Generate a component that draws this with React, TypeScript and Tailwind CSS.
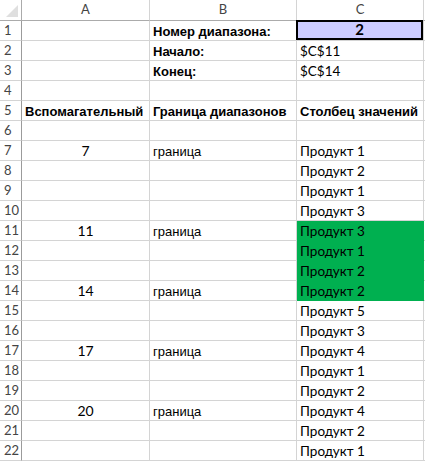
import React from "react"

type Cell = { v?: string; bold?: boolean; center?: boolean; arial?: boolean; bg?: string; sel?: boolean }
type Row = [Cell, Cell, Cell]

const e: Cell = {}
const prod = (n: number, green = false): Cell => ({ v: `Продукт ${n}`, bg: green ? "bg-[#00b050]" : undefined })
const num = (n: number): Cell => ({ v: String(n), center: true })
const gr: Cell = { v: "граница", arial: true }

const rows: Row[] = [
  [e, { v: "Номер диапазона:", bold: true, arial: true }, { v: "2", bold: true, center: true, sel: true }],
  [e, { v: "Начало:", bold: true, arial: true }, { v: "$C$11" }],
  [e, { v: "Конец:", bold: true, arial: true }, { v: "$C$14" }],
  [e, e, e],
  [
    { v: "Вспомагательный", bold: true, arial: true },
    { v: "Граница диапазонов", bold: true, arial: true },
    { v: "Столбец значений", bold: true, arial: true },
  ],
  [e, e, e],
  [num(7), gr, prod(1)],
  [e, e, prod(2)],
  [e, e, prod(1)],
  [e, e, prod(3)],
  [num(11), gr, prod(3, true)],
  [e, e, prod(1, true)],
  [e, e, prod(2, true)],
  [num(14), gr, prod(2, true)],
  [e, e, prod(5)],
  [e, e, prod(3)],
  [num(17), gr, prod(4)],
  [e, e, prod(1)],
  [e, e, prod(2)],
  [num(20), gr, prod(4)],
  [e, e, prod(2)],
  [e, e, prod(1)],
]

function DataCell({ c }: { c: Cell }) {
  if (c.sel) {
    return (
      <div className="relative h-5 border-r border-b border-[#d4d4d4]">
        <div className="absolute -left-px -top-px right-0 bottom-0 flex items-end justify-center border-2 border-black bg-[#ccccff] pb-px text-[15px] font-bold leading-none text-black [font-family:Lato,sans-serif]">
          {c.v}
        </div>
      </div>
    )
  }
  let font = "[font-family:Lato,sans-serif] text-[13.5px]"
  if (c.arial) font = "[font-family:'Liberation_Sans',Arial,sans-serif] text-[13px]"
  if (c.center) font = "[font-family:Lato,sans-serif] text-[14px]"
  return (
    <div
      className={`flex h-5 items-end overflow-hidden whitespace-nowrap border-r border-b pb-[2px] leading-none text-black ${
        c.bg ? `${c.bg} border-[#00b050]` : "border-[#d4d4d4]"
      } ${c.center ? "justify-center" : "pl-[3px]"} ${c.bold ? "font-bold" : ""} ${font}`}
    >
      {c.v}
    </div>
  )
}

export default function App() {
  return (
    <div className="h-[463px] w-[425px] overflow-hidden bg-white">
      <div className="grid grid-cols-[22px_128px_147px_127px_1fr] [font-family:'Segoe_UI',Lato,sans-serif]">
        <div className="relative h-[21px] border-r border-b border-[#ababab]">
          <div className="absolute right-[3px] bottom-[3px] h-0 w-0 border-l-[12px] border-t-[12px] border-l-transparent border-t-transparent border-r-0 border-b-[12px] border-b-[#dfdfdf] [border-left-style:solid]" />
        </div>
        {["A", "B", "C"].map((h) => (
          <div
            key={h}
            className="flex h-[21px] items-center justify-center border-r border-b border-r-[#d4d4d4] border-b-[#ababab] text-[13px] text-[#444]"
          >
            {h}
          </div>
        ))}
        <div className="h-[21px] border-b border-[#ababab]" />
        {rows.map((r, i) => (
          <React.Fragment key={i}>
            <div className="flex h-5 items-center border-r border-b border-r-[#9b9b9b] border-b-[#d4d4d4] pl-[4px] text-[13px] text-[#444]">
              {i + 1}
            </div>
            <DataCell c={r[0]} />
            <DataCell c={r[1]} />
            <DataCell c={r[2]} />
            <div className="h-5 border-b border-[#d4d4d4]" />
          </React.Fragment>
        ))}
      </div>
    </div>
  )
}
